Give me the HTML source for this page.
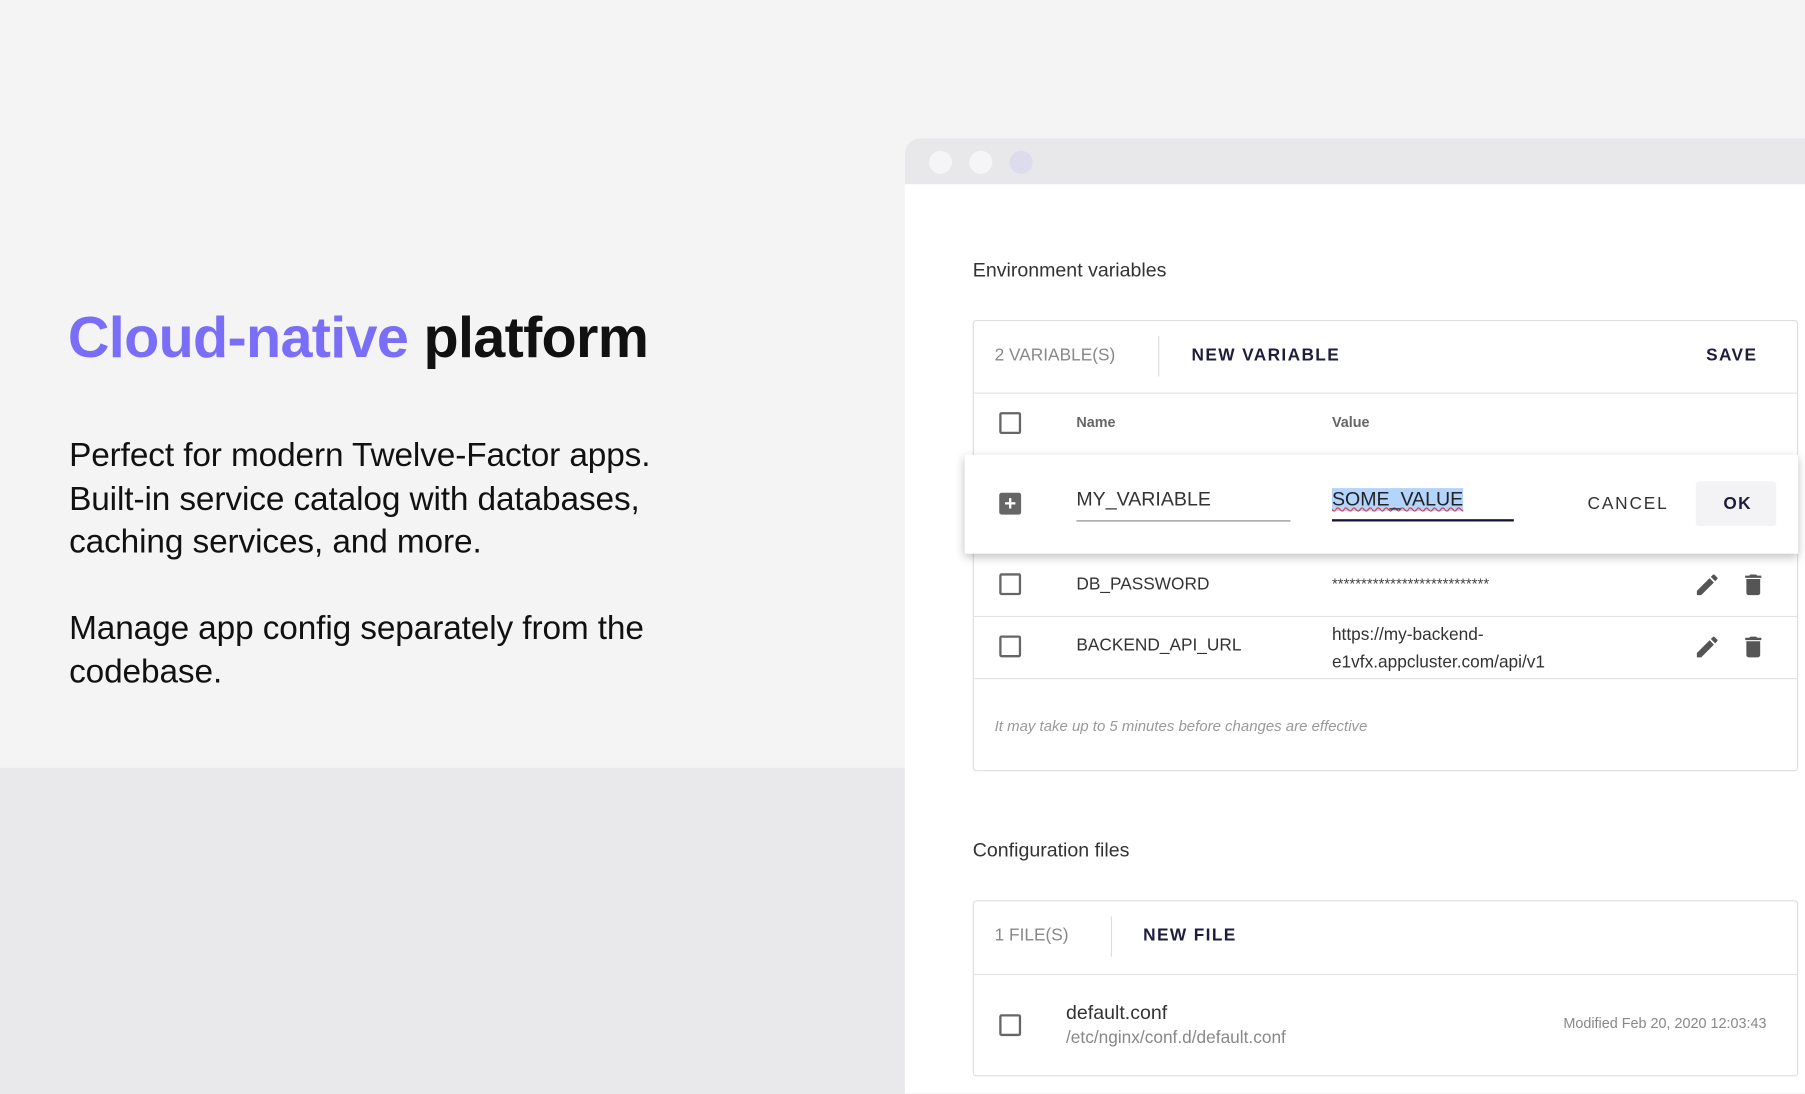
<!DOCTYPE html>
<html><head><meta charset="utf-8"><style>
*{margin:0;padding:0;box-sizing:border-box}
html,body{width:1805px;height:1080px;overflow:hidden;background:#e9e9ec}
#s{position:absolute;left:0;top:0;width:1568px;height:938px;transform:scale(1.1512);transform-origin:0 0;font-family:"Liberation Sans",sans-serif}
.a{position:absolute;white-space:nowrap}
.top{left:0;top:0;width:1568px;height:667px;background:#f4f4f4}
.win{left:786px;top:120px;width:800px;height:830px;background:#fff;border-radius:14px 0 0 0;overflow:hidden}
.bar{left:0;top:0;width:800px;height:40px;background:#e8e8eb}
.dot{width:20px;height:20px;border-radius:50%;top:11px;background:#f5f5f7}
.h{font-size:17px;color:#333}
.card{border:1px solid #dedede;border-radius:3px;background:#fff}
.muted{font-size:15px;color:#888}
.btn{font-size:15px;font-weight:bold;color:#1e1e3c;letter-spacing:1.2px}
.cb{width:19px;height:19px;border:2px solid #666;border-radius:2px}
.th{font-size:12.5px;font-weight:bold;color:#666}
.td{font-size:15px;color:#333}
.line{height:1px;background:#e3e3e3}
</style></head><body><div id="s">
<div class="a top"></div>
<div class="a" style="left:59px;top:264px;font-size:50px;font-weight:bold;letter-spacing:-0.6px;color:#111"><span style="color:#7a6ef8">Cloud-native</span> platform</div>
<div class="a" style="left:60px;top:378px;font-size:29px;line-height:37.5px;letter-spacing:-0.1px;color:#111">Perfect for modern Twelve-Factor apps.<br>Built-in service catalog with databases,<br>caching services, and more.<br><br>Manage app config separately from the<br>codebase.</div>

<div class="a win">
<div class="a bar"></div>
<div class="a dot" style="left:21px"></div>
<div class="a dot" style="left:56px"></div>
<div class="a dot" style="left:91px;background:#dcdcec"></div>
</div>

<div class="a h" style="left:845px;top:225px">Environment variables</div>
<div class="a card" style="left:845px;top:278px;width:717px;height:392px"></div>
<div class="a muted" style="left:864px;top:300px">2 VARIABLE(S)</div>
<div class="a" style="left:1006px;top:292px;width:1px;height:35px;background:#ddd"></div>
<div class="a btn" style="left:1035px;top:300px">NEW VARIABLE</div>
<div class="a btn" style="left:1482px;top:300px">SAVE</div>
<div class="a line" style="left:846px;top:341px;width:715px"></div>
<div class="a cb" style="left:868px;top:358px"></div>
<div class="a th" style="left:935px;top:360px">Name</div>
<div class="a th" style="left:1157px;top:360px">Value</div>

<div class="a" style="left:838px;top:395px;width:724px;height:86px;background:#fff;box-shadow:0 3px 8px rgba(0,0,0,.25);z-index:2">
<div class="a" style="left:30px;top:33px;width:19px;height:19px;background:#666;border-radius:2px;color:#fff;font-size:18px;line-height:19px;text-align:center;font-weight:bold">+</div>
<div class="a" style="left:97px;top:29px;font-size:17px;color:#333">MY_VARIABLE</div>
<div class="a" style="left:97px;top:57px;width:186px;height:1px;background:#888"></div>
<div class="a" style="left:319px;top:29px;font-size:17px;color:#222;background:#b3d4fc;text-decoration:underline wavy #e33;text-decoration-thickness:1px">SOME_VALUE</div>
<div class="a" style="left:319px;top:56px;width:158px;height:2px;background:#14143a"></div>
<div class="a btn" style="left:541px;top:34px;color:#333;font-weight:normal;letter-spacing:1.6px">CANCEL</div>
<div class="a" style="left:635px;top:23px;width:70px;height:39px;background:#f3f3f6;border-radius:3px"></div>
<div class="a btn" style="left:659px;top:34px">OK</div>
</div>

<div class="a cb" style="left:868px;top:498px"></div>
<div class="a td" style="left:935px;top:499px">DB_PASSWORD</div>
<div class="a" style="left:1157px;top:499px;font-size:13px;color:#444">***************************</div>
<div class="a line" style="left:846px;top:535px;width:715px"></div>
<div class="a cb" style="left:868px;top:552px"></div>
<div class="a td" style="left:935px;top:552px">BACKEND_API_URL</div>
<div class="a td" style="left:1157px;top:540px;line-height:24px">https://my-backend-<br>e1vfx.appcluster.com/api/v1</div>
<div class="a line" style="left:846px;top:589px;width:715px"></div>
<svg class="a" style="left:1471px;top:496px" width="24" height="24" viewBox="0 0 24 24"><path fill="#555" d="M3 17.25V21h3.75L17.81 9.94l-3.75-3.75L3 17.25zM20.71 7.04a1 1 0 000-1.41l-2.340-2.34a1 1 0 00-1.41 0l-1.83 1.83 3.75 3.75 1.83-1.83z"/></svg>
<svg class="a" style="left:1511px;top:496px" width="24" height="24" viewBox="0 0 24 24"><path fill="#555" d="M6 19c0 1.1.9 2 2 2h8c1.1 0 2-.9 2-2V7H6v12zM19 4h-3.5l-1-1h-5l-1 1H5v2h14V4z"/></svg>
<svg class="a" style="left:1471px;top:550px" width="24" height="24" viewBox="0 0 24 24"><path fill="#555" d="M3 17.25V21h3.75L17.81 9.94l-3.75-3.75L3 17.25zM20.71 7.04a1 1 0 000-1.41l-2.34-2.34a1 1 0 00-1.41 0l-1.83 1.83 3.75 3.75 1.83-1.83z"/></svg>
<svg class="a" style="left:1511px;top:550px" width="24" height="24" viewBox="0 0 24 24"><path fill="#555" d="M6 19c0 1.1.9 2 2 2h8c1.1 0 2-.9 2-2V7H6v12zM19 4h-3.5l-1-1h-5l-1 1H5v2h14V4z"/></svg>
<div class="a" style="left:864px;top:623px;font-size:13px;font-style:italic;color:#999">It may take up to 5 minutes before changes are effective</div>

<div class="a h" style="left:845px;top:729px">Configuration files</div>
<div class="a card" style="left:845px;top:782px;width:717px;height:153px"></div>
<div class="a muted" style="left:864px;top:804px">1 FILE(S)</div>
<div class="a" style="left:965px;top:796px;width:1px;height:35px;background:#ddd"></div>
<div class="a btn" style="left:993px;top:804px">NEW FILE</div>
<div class="a line" style="left:846px;top:846px;width:715px"></div>
<div class="a cb" style="left:868px;top:881px"></div>
<div class="a" style="left:926px;top:870px;font-size:17px;color:#333">default.conf</div>
<div class="a" style="left:926px;top:893px;font-size:15px;color:#888">/etc/nginx/conf.d/default.conf</div>
<div class="a" style="left:1358px;top:882px;font-size:12.5px;color:#888">Modified Feb 20, 2020 12:03:43</div>
</div></body></html>
